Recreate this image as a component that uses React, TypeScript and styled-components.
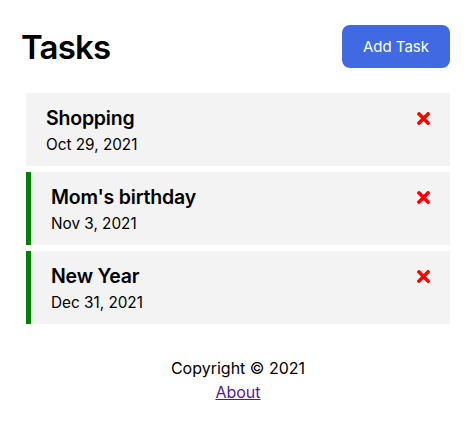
import styled, { createGlobalStyle } from 'styled-components';
import { FaTimes } from 'react-icons/fa';

const GlobalStyle = createGlobalStyle`
    * {
        box-sizing: border-box;
    }
    body {
        margin: 0;
        font-family: Inter, "Noto Sans", sans-serif;
        background: #fff;
        color: #000;
    }
`;

const Container = styled.div`
    width: 474px;
    padding: 20px 19px 0 21px;
`;

const Header = styled.header`
    display: flex;
    justify-content: space-between;
    align-items: center;
    margin-bottom: 20px;
`;

const Title = styled.h1`
    margin: 0;
    font-size: 33px;
    font-weight: 600;
    letter-spacing: -0.8px;
`;

const Button = styled.button<{ color: string }>`
    background: ${({ color }) => color};
    color: #fff;
    border: none;
    padding: 10px 21px;
    margin: 5px;
    border-radius: 8px;
    font-family: inherit;
    font-size: 15px;
    line-height: 23px;
    cursor: pointer;
`;

const TaskList = styled.div`
    display: flex;
    flex-direction: column;
    gap: 6px;
`;

const TaskCard = styled.div<{ reminder: boolean }>`
    background: #f3f3f3;
    margin: 0 5px;
    height: 73px;
    padding: 10px 20px;
    border-left: ${({ reminder }) => (reminder ? '5px solid #008000' : 'none')};
    cursor: pointer;
`;

const TaskTitle = styled.h3`
    display: flex;
    align-items: center;
    justify-content: space-between;
    margin: 0;
    font-size: 19.5px;
    font-weight: 600;
    line-height: 30px;
    letter-spacing: -0.2px;

    svg {
        color: #ff0000;
        font-size: 19px;
        margin-right: -3px;
        cursor: pointer;
    }
`;

const TaskDay = styled.p`
    margin: 0;
    font-size: 15.3px;
    line-height: 24px;
`;

const Footer = styled.footer`
    margin-top: 32px;
    text-align: center;
    font-size: 16px;
    line-height: 24px;

    p {
        margin: 0;
    }

    a {
        color: #551a8b;
    }
`;

const tasks = [
    { id: 1, text: 'Shopping', day: 'Oct 29, 2021', reminder: false },
    { id: 2, text: "Mom's birthday", day: 'Nov 3, 2021', reminder: true },
    { id: 3, text: 'New Year', day: 'Dec 31, 2021', reminder: true },
];

const App = () => {
    return (
        <>
            <GlobalStyle />
            <Container>
                <Header>
                    <Title>Tasks</Title>
                    <Button color="#4169e1">Add Task</Button>
                </Header>
                <TaskList>
                    {tasks.map((task) => (
                        <TaskCard key={task.id} reminder={task.reminder}>
                            <TaskTitle>
                                {task.text} <FaTimes />
                            </TaskTitle>
                            <TaskDay>{task.day}</TaskDay>
                        </TaskCard>
                    ))}
                </TaskList>
                <Footer>
                    <p>Copyright &copy; 2021</p>
                    <a href="#about">About</a>
                </Footer>
            </Container>
        </>
    );
};

export default App;
